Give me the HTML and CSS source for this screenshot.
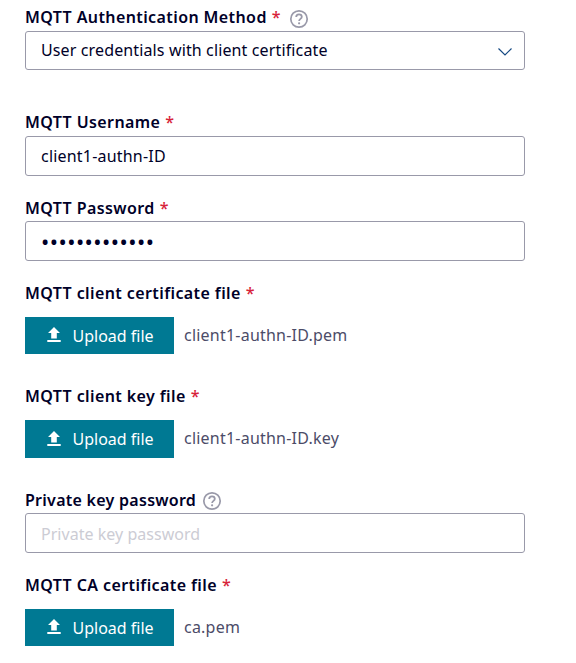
FILE: index.html
```html
<!DOCTYPE html>
<html lang="en">
<head>
<meta charset="utf-8">
<title>MQTT settings</title>
<link rel="stylesheet" href="styles.css">
</head>
<body>
<svg class="defs" aria-hidden="true">
  <symbol id="help" viewBox="0 0 20 20"><circle cx="10" cy="10" r="8.2" fill="none" stroke="currentColor" stroke-width="1.7"/><path d="M7.2 8c0-1.7 1.1-2.7 2.8-2.7s2.8 1 2.8 2.5c0 2-2.7 2.2-2.7 4.2" fill="none" stroke="currentColor" stroke-width="1.8"/><circle cx="10.1" cy="14.3" r="1.1" fill="currentColor"/></symbol>
  <symbol id="upload" viewBox="0 0 14 15"><path d="M7 0 13 6H9.8V11.5H4.2V6H1ZM0.3 13H13.7V15H0.3Z" fill="currentColor"/></symbol>
</svg>
<form class="form">
  <div class="field method">
    <div class="label"><span>MQTT Authentication Method</span><span class="req">*</span><svg class="help"><use href="#help"/></svg></div>
    <div class="box select"><span>User credentials with client certificate</span><svg class="chevron" viewBox="0 0 14 8"><path d="M0.5 0.5 7 7 13.5 0.5" fill="none" stroke="currentColor" stroke-width="1.2"/></svg></div>
  </div>
  <div class="field username">
    <div class="label"><span>MQTT Username</span><span class="req">*</span></div>
    <div class="box"><span class="value">client1-authn-ID</span></div>
  </div>
  <div class="field password">
    <div class="label"><span>MQTT Password</span><span class="req">*</span></div>
    <div class="box"><span class="dots">•••••••••••••</span></div>
  </div>
  <div class="field cert">
    <div class="label"><span>MQTT client certificate file</span><span class="req">*</span></div>
    <div class="row"><div class="button"><svg class="up"><use href="#upload"/></svg><span>Upload file</span></div><span class="file">client1-authn-ID.pem</span></div>
  </div>
  <div class="field key">
    <div class="label"><span>MQTT client key file</span><span class="req">*</span></div>
    <div class="row"><div class="button"><svg class="up"><use href="#upload"/></svg><span>Upload file</span></div><span class="file">client1-authn-ID.key</span></div>
  </div>
  <div class="field private">
    <div class="label"><span>Private key password</span><svg class="help"><use href="#help"/></svg></div>
    <div class="box"><span class="placeholder">Private key password</span></div>
  </div>
  <div class="field ca">
    <div class="label"><span>MQTT CA certificate file</span><span class="req">*</span></div>
    <div class="row"><div class="button"><svg class="up"><use href="#upload"/></svg><span>Upload file</span></div><span class="file">ca.pem</span></div>
  </div>
</form>
</body>
</html>
```
FILE: styles.css
```css
* { box-sizing: border-box; }
body { margin: 0; background: #fff; color: #000028; font: 16px/22px "Noto Sans", sans-serif; }
.defs { display: none; }
.form { width: 525px; padding: 6px 0 0 25px; }
.label { display: flex; align-items: center; height: 22px; font-weight: 600; letter-spacing: 0.4px; white-space: nowrap; }
.req { color: #d72339; margin-left: 5px; font-weight: 500; letter-spacing: 0; }
.help { width: 20px; height: 20px; margin: 3px 0 0 8px; color: #9999a9; }
.box { display: flex; align-items: center; justify-content: space-between; width: 500px; height: 40px; margin-top: 3px; padding: 0 12px 0 15px; border: 1px solid #9999a9; border-radius: 3px; white-space: nowrap; }
.select { height: 39px; padding-bottom: 1px; letter-spacing: 0.13px; }
.value { letter-spacing: 0.2px; }
.dots { padding-bottom: 1px; font-size: 22px; letter-spacing: 0.45px; }
.chevron { width: 14px; height: 8px; margin-top: 4px; color: #164a83; }
.row { display: flex; align-items: center; margin-top: 13px; white-space: nowrap; }
.button { display: flex; align-items: center; width: 149px; height: 37px; padding-left: 22px; background: #007993; color: #fff; }
.up { width: 14px; height: 15px; margin: 0 11.5px 2px 0; }
.file { margin: 0 0 2px 10px; color: #4c4c68; letter-spacing: 0.22px; }
.placeholder { padding-top: 2px; color: #ccccd4; letter-spacing: 0.03px; }
.username { margin-top: 41px; }
.password, .cert, .ca { margin-top: 21px; }
.key, .private { margin-top: 31px; }
.key .button { height: 38px; }
.password .box, .private .box { margin-top: 2px; }
.private .label { letter-spacing: 0.27px; }
.private .help { margin: 1px 0 0 6px; }
```
